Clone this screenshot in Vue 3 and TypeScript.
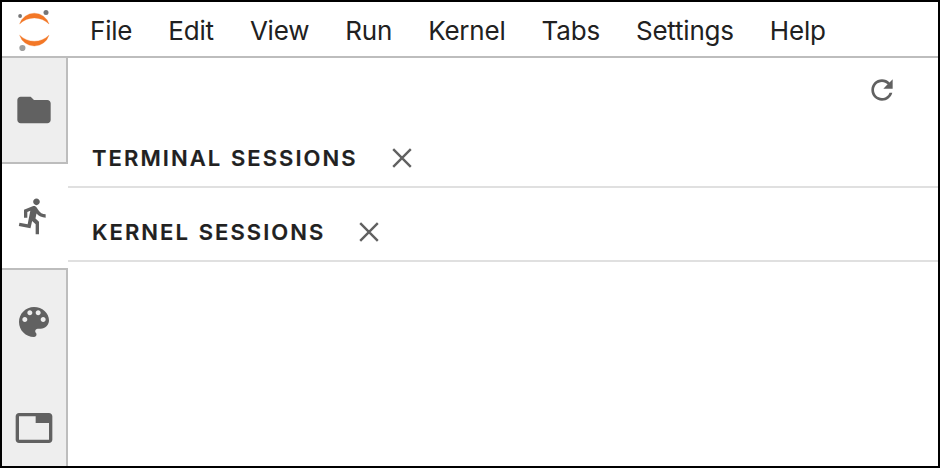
<script setup lang="ts">
interface SideTab {
  id: string
  label: string
  path: string
}

const menus: string[] = ['File', 'Edit', 'View', 'Run', 'Kernel', 'Tabs', 'Settings', 'Help']

const tabs: SideTab[] = [
  {
    id: 'files',
    label: 'Files',
    path: 'M10 4H4c-1.1 0-1.99.9-1.99 2L2 18c0 1.1.9 2 2 2h16c1.1 0 2-.9 2-2V8c0-1.1-.9-2-2-2h-8l-2-2z',
  },
  {
    id: 'running',
    label: 'Running',
    path: 'M13.49 5.48c1.1 0 2-.9 2-2s-.9-2-2-2-2 .9-2 2 .9 2 2 2zm-3.6 13.9l1-4.4 2.1 2v6h2v-7.5l-2.1-2 .6-3c1.3 1.5 3.3 2.5 5.5 2.5v-2c-1.9 0-3.5-1-4.3-2.4l-1-1.6c-.4-.6-1-1-1.7-1-.3 0-.5.1-.8.1l-5.2 2.2v4.7h2v-3.4l1.8-.7-1.6 8.1-4.9-1-.4 2 7 1.4z',
  },
  {
    id: 'commands',
    label: 'Commands',
    path: 'M12 3c-4.97 0-9 4.03-9 9s4.03 9 9 9c.83 0 1.5-.67 1.5-1.5 0-.39-.15-.74-.39-1.01-.23-.26-.38-.61-.38-.99 0-.83.67-1.5 1.5-1.5H16c2.76 0 5-2.24 5-5 0-4.42-4.03-8-9-8zm-5.5 9c-.83 0-1.5-.67-1.5-1.5S5.67 9 6.5 9 8 9.67 8 10.5 7.33 12 6.5 12zm3-4C8.67 8 8 7.33 8 6.5S8.67 5 9.5 5s1.5.67 1.5 1.5S10.33 8 9.5 8zm5 0c-.83 0-1.5-.67-1.5-1.5S13.67 5 14.5 5s1.5.67 1.5 1.5S15.33 8 14.5 8zm3 4c-.83 0-1.5-.67-1.5-1.5S16.67 9 17.5 9s1.5.67 1.5 1.5-.67 1.5-1.5 1.5z',
  },
  {
    id: 'tabs',
    label: 'Tabs',
    path: 'M21 3H3c-1.1 0-2 .9-2 2v14c0 1.1.9 2 2 2h18c1.1 0 2-.9 2-2V5c0-1.1-.9-2-2-2zm0 16H3V5h10v4h8v10z',
  },
]

const activeTab = 'running'
const sections: string[] = ['Terminal Sessions', 'Kernel Sessions']
</script>

<template>
  <div class="window">
    <header class="menubar">
      <svg class="logo" viewBox="0 0 36 44" aria-hidden="true">
        <path class="arc" d="M2.600 17A15.400 15.400 0 0 1 32 17A20.900 20.900 0 0 0 2.600 17z" />
        <path class="arc" d="M2.600 28.200A15.400 15.400 0 0 0 32 28.200A20.900 20.900 0 0 1 2.600 28.200z" />
        <circle cx="29" cy="5.600" r="2.500" fill="#767677" />
        <circle cx="3.100" cy="9" r="1.900" fill="#767677" />
        <circle cx="5.400" cy="41" r="3.100" fill="#9e9e9e" />
      </svg>
      <nav class="menus">
        <span v-for="menu in menus" :key="menu" class="menu">{{ menu }}</span>
      </nav>
    </header>
    <div class="body">
      <aside class="sidebar">
        <div
          v-for="tab in tabs"
          :key="tab.id"
          class="tab"
          :class="{ active: tab.id === activeTab, plain: tab.id === 'commands' || tab.id === 'tabs' }"
          :aria-label="tab.label"
        >
          <svg class="tab-icon" viewBox="0 0 24 24"><path :d="tab.path" /></svg>
        </div>
      </aside>
      <main class="panel">
        <div class="toolbar">
          <svg class="refresh" viewBox="0 0 24 24">
            <path d="M17.650 6.350C16.200 4.900 14.210 4 12 4c-4.420 0-7.990 3.580-7.990 8s3.570 8 7.990 8c3.730 0 6.840-2.550 7.730-6h-2.080c-.82 2.330-3.040 4-5.650 4-3.310 0-6-2.690-6-6s2.690-6 6-6c1.660 0 3.140.69 4.220 1.780L13 11h7V4l-2.350 2.350z" />
          </svg>
        </div>
        <section v-for="section in sections" :key="section" class="section">
          <h2>{{ section }}</h2>
          <svg class="close" viewBox="0 0 20 20"><path d="M1.200 1.200L18.800 18.800M18.800 1.200L1.200 18.800" /></svg>
        </section>
      </main>
    </div>
  </div>
</template>

<style>
body {
  margin: 0;
}
</style>

<style scoped>
.window {
  box-sizing: border-box;
  width: 940px;
  height: 468px;
  border: 2px solid #000;
  background: #fff;
  display: flex;
  flex-direction: column;
  overflow: hidden;
  color: #212121;
  font-family: Inter, "Liberation Sans", sans-serif;
}
.menubar {
  flex: none;
  display: flex;
  height: 54px;
  border-bottom: 2px solid #bdbdbd;
}
.logo {
  flex: none;
  width: 36px;
  height: 44px;
  margin: 5px 0 0 15px;
}
.arc {
  fill: #f37726;
  stroke: #f37726;
  stroke-width: 0.3;
}
.menus {
  display: flex;
  margin-left: 19px;
}
.menu {
  padding: 0 18px;
  font-size: 26px;
  line-height: 57px;
  letter-spacing: -0.2px;
}
.body {
  flex: 1;
  min-height: 0;
  display: flex;
}
.sidebar {
  flex: none;
  width: 66px;
  overflow: hidden;
}
.tab {
  box-sizing: border-box;
  height: 106px;
  display: flex;
  align-items: center;
  justify-content: center;
  background: #eee;
  border-right: 2px solid #bdbdbd;
  border-bottom: 2px solid #bdbdbd;
}
.tab.active {
  background: #fff;
  border-right: 0;
  padding-right: 2px;
}
.tab.plain {
  border-bottom: 0;
  padding-bottom: 2px;
}
.tab-icon {
  width: 40px;
  height: 40px;
  fill: #616161;
}
.panel {
  flex: 1;
}
.toolbar {
  display: flex;
  justify-content: flex-end;
  height: 56px;
  padding: 16px 40px 0 0;
}
.refresh {
  width: 32px;
  height: 32px;
  fill: #616161;
}
.section {
  display: flex;
  align-items: center;
  box-sizing: border-box;
  height: 74px;
  padding: 16px 0 0 24px;
  border-bottom: 2px solid #e0e0e0;
}
.section:nth-of-type(1) {
  height: 58px;
  padding-top: 0;
}
h2 {
  margin: 0;
  font-size: 22px;
  line-height: 28px;
  font-weight: 600;
  letter-spacing: 2.070px;
  word-spacing: 1px;
  text-transform: uppercase;
  -webkit-text-stroke: 0.2px #212121;
}
.close {
  width: 20px;
  height: 20px;
  margin-left: 34px;
  fill: none;
  stroke: #616161;
  stroke-width: 2.400;
}
</style>
